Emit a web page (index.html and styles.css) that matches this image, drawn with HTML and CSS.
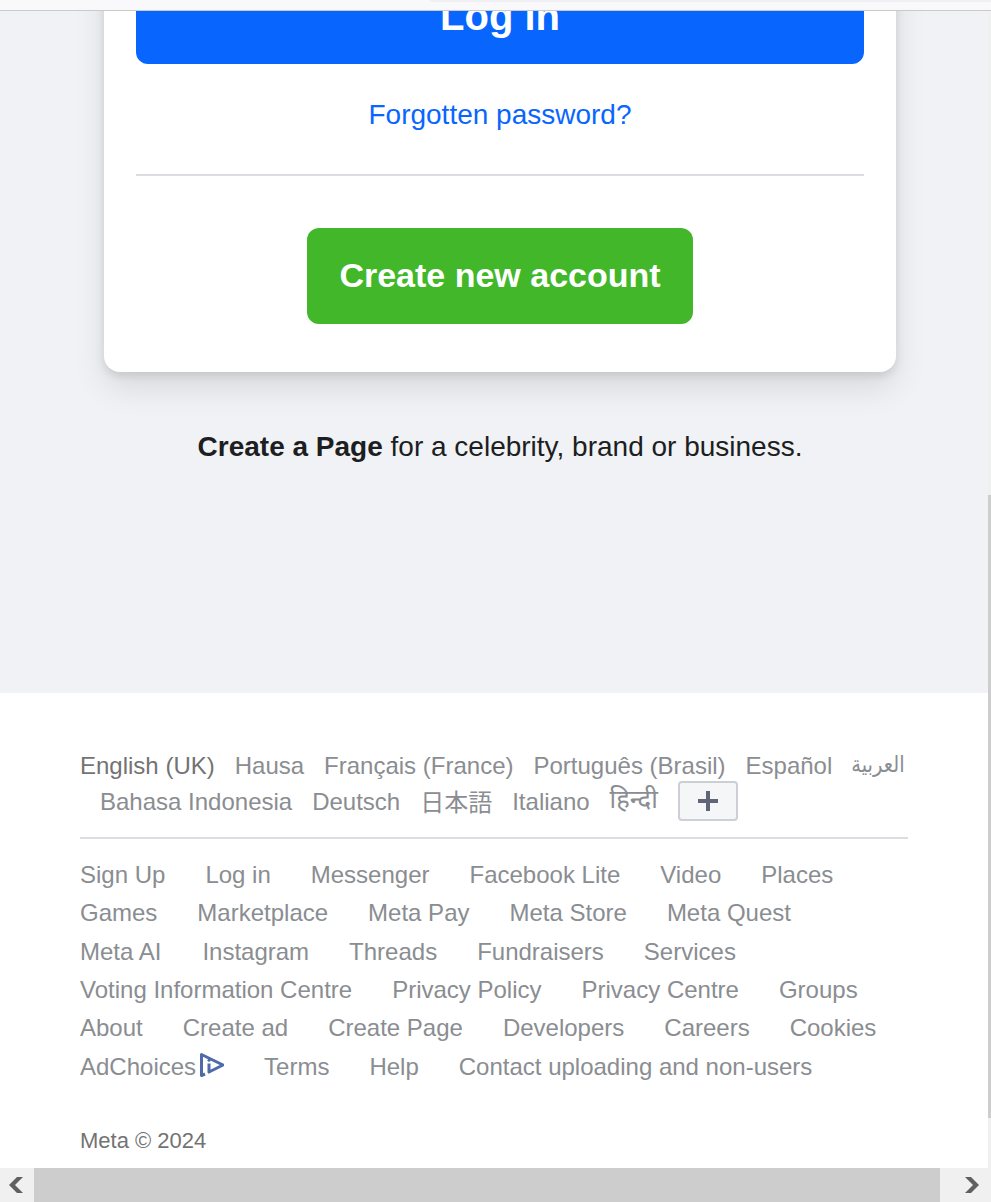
FILE: index.html
```html
<!DOCTYPE html>
<html lang="en">
<head>
<meta charset="utf-8">
<title>Log in</title>
<link rel="stylesheet" href="styles.css">
</head>
<body>
<div class="toolbar"><div class="toolbar-tab"></div></div>
<div class="viewport">
  <div class="page">
    <main class="hero">
      <section class="card">
        <button class="login">Log in</button>
        <a class="forgot">Forgotten password?</a>
        <div class="divider"></div>
        <button class="create">Create new account</button>
      </section>
      <p class="create-page"><b>Create a Page</b> for a celebrity, brand or business.</p>
    </main>
    <footer class="footer">
      <div class="langs">
        <span class="current">English (UK)</span><a>Hausa</a><a>Français (France)</a><a>Português (Brasil)</a><a>Español</a><a class="arabic" lang="ar">العربية</a>
      </div>
      <div class="langs second">
        <a>Bahasa Indonesia</a><a>Deutsch</a><a class="cjk" lang="ja">日本語</a><a>Italiano</a><a class="hindi" lang="hi">हिन्दी</a>
        <button class="more" aria-label="More languages"><svg width="22" height="22" viewBox="0 0 22 22"><path d="M11 1v20M1 11h20" stroke="#606577" stroke-width="4"/></svg></button>
      </div>
      <div class="rule"></div>
      <nav class="links">
        <div class="row"><a>Sign Up</a><a>Log in</a><a>Messenger</a><a>Facebook Lite</a><a>Video</a><a>Places</a></div>
        <div class="row"><a>Games</a><a>Marketplace</a><a>Meta Pay</a><a>Meta Store</a><a>Meta Quest</a></div>
        <div class="row"><a class="meta-ai">Meta AI</a><a>Instagram</a><a>Threads</a><a>Fundraisers</a><a>Services</a></div>
        <div class="row"><a>Voting Information Centre</a><a>Privacy Policy</a><a>Privacy Centre</a><a>Groups</a></div>
        <div class="row"><a>About</a><a>Create ad</a><a>Create Page</a><a>Developers</a><a>Careers</a><a>Cookies</a></div>
        <div class="row last"><a class="ads">AdChoices<svg class="ad-icon" width="27" height="26" viewBox="0 0 27 26"><path d="M8 22L4.500 23.500V2.500L26 13L12 20V11.500" fill="none" stroke="#4f6aa8" stroke-width="3" stroke-linejoin="round"/><circle cx="12" cy="8.300" r="1.500" fill="#4f6aa8"/></svg></a><a>Terms</a><a>Help</a><a>Contact uploading and non-users</a></div>
      </nav>
      <div class="copyright">Meta © 2024</div>
    </footer>
  </div>
  <div class="vscroll"><div class="vthumb"></div></div>
</div>
<div class="hscroll">
  <svg width="34" height="34" viewBox="0 0 34 34"><path d="M17 9h6l-8 8 8 8h-6l-8-8z" fill="#606060"/></svg>
  <div class="hthumb"></div>
  <svg class="right" width="34" height="34" viewBox="0 0 34 34"><path d="M8 9h6l8 8-8 8H8l8-8z" fill="#606060"/></svg>
</div>
</body>
</html>
```
FILE: styles.css
```css
* { box-sizing: border-box; }
body {
  margin: 0;
  width: 991px;
  height: 1202px;
  overflow: hidden;
  display: flex;
  flex-direction: column;
  font-family: "Liberation Sans", Arial, "Noto Sans CJK JP", sans-serif;
  background: #fff;
}
button { font-family: inherit; border: 0; padding: 0; }
.toolbar { height: 11px; flex: none; background: #f9f9fb; border-bottom: 1px solid #cacacc; }
.toolbar-tab { height: 2px; margin-left: 430px; background: #f0f0f4; border-bottom-left-radius: 2px; }
.viewport { height: 1157px; flex: none; display: flex; overflow: hidden; }
.page { width: 988px; overflow: hidden; }
.hero { height: 682px; background: #f0f2f5; overflow: hidden; }
.card {
  width: 792px;
  height: 461px;
  margin: -100px 0 0 104px;
  padding: 57px 32px 0;
  display: flex;
  flex-direction: column;
  align-items: center;
  background: #fff;
  border-radius: 16px;
  box-shadow: 0 4px 8px rgba(0, 0, 0, .1), 0 16px 32px rgba(0, 0, 0, .1);
}
.login { width: 728px; height: 96px; flex: none; border-radius: 12px; background: #0866ff; color: #fff; font-size: 40px; font-weight: bold; line-height: 96px; }
.forgot { margin-top: 32px; font-size: 28px; line-height: 38px; color: #0866ff; }
.divider { width: 728px; height: 2px; flex: none; margin-top: 40px; background: #dadde1; }
.create { width: 386px; height: 96px; flex: none; margin-top: 52px; border-radius: 12px; background: #42b72a; color: #fff; font-size: 34px; font-weight: bold; line-height: 95px; padding-bottom: 1px; }
.create-page { width: 792px; margin: 56px 0 0 104px; font-size: 28px; line-height: 38px; text-align: center; color: #1c1e21; }
.footer { padding: 55px 80px 0; font-size: 24px; color: #8a8d91; }
.langs { display: flex; gap: 20px; height: 36px; line-height: 36px; white-space: nowrap; }
.current { color: #737373; }
.second { padding-left: 20px; }
.arabic { margin-left: -1px; font-family: "DejaVu Sans", sans-serif; font-size: 19.5px; line-height: 34px; transform: scaleY(1.15); }
.cjk { font-family: "Noto Sans CJK JP", sans-serif; line-height: 34px; }
.hindi { width: 49px; font-size: 25.5px; font-family: "Noto Sans Devanagari", sans-serif; }
.more { width: 60px; height: 40px; margin: -3px 0 0 -1px; flex: none; display: flex; align-items: center; justify-content: center; background: #f5f6f7; border: 2px solid #ccd0d5; border-radius: 4px; }
.rule { width: 828px; height: 2px; margin: 17px 0; background: #dadde1; }
.row { display: flex; gap: 40px; height: 38.3px; line-height: 38.3px; white-space: nowrap; }
.last { margin-top: 0.6px; }
.meta-ai { padding-right: 1px; }
.ads { display: flex; }
.ad-icon { margin: 4px 0 0 1px; }
.copyright { margin-top: 41px; font-size: 22px; line-height: 28px; color: #737373; }
.vscroll { width: 3px; padding-top: 484px; background: #f0f0f0; }
.vthumb { height: 623px; background: #cdcdcd; }
.hscroll { height: 34px; flex: none; display: flex; background: #f0f0f0; }
.hthumb { width: 906px; background: #cdcdcd; }
.right { margin-left: 17px; }
```
